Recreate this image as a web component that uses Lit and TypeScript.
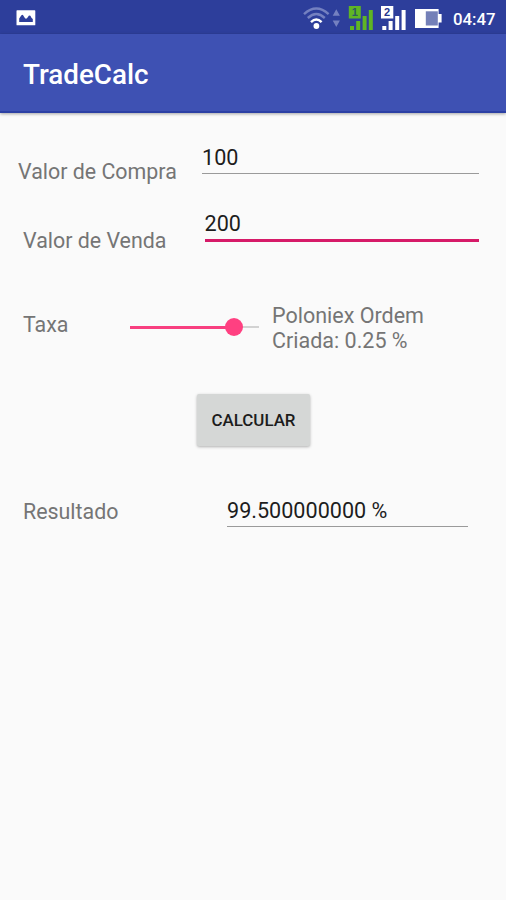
import { LitElement, html, css } from "lit";
import { customElement, property, state } from "lit/decorators.js";

@customElement("status-bar")
class StatusBar extends LitElement {
  static styles = css`
    :host {
      display: flex;
      align-items: flex-start;
      justify-content: space-between;
      height: 34px;
      background: #2d3e9b;
      color: #fff;
    }
    svg { display: block; }
    .photo { margin: 10px 0 0 16px; }
    .right { display: flex; height: 34px; margin-right: 10px; }
    .time {
      width: 43px;
      line-height: 38px;
      font-size: 16.8px;
      font-weight: 500;
      white-space: nowrap;
    }
    .badge { font: 700 11px "Liberation Sans", sans-serif; }
  `;
  render() {
    return html`
      <svg class="photo" width="20" height="16" viewBox="0 0 20 16">
        <rect x="0.5" y="0.3" width="18.8" height="15" rx="0.6" fill="#fff" />
        <path d="M3.2 12V8.6l2.2-3.4 1.4-.4 2.4 3.6 1.6.2 2.2-3 1.4.2 1.2 2.2 1.2 1V12z" fill="#2d3e9b" />
      </svg>
      <div class="right">
        <svg width="153" height="34" viewBox="300 0 153 34">
          <g fill="none" stroke-width="2.4">
            <path d="M304 14.2Q316.3 3 328.6 14.2" stroke="#7480c0" />
            <path d="M307.8 18Q316.3 10.2 324.8 18" stroke="#7480c0" />
            <path d="M311 22.2Q316.3 17 321.6 22.2" stroke="#fff" />
          </g>
          <circle cx="316.4" cy="26" r="2.9" fill="#fff" />
          <path d="M336.3 9.3l3.6 6.4h-7.2zM336.3 27l3.6-6.4h-7.2z" fill="#7480c0" />
          <g fill="#5fb524">
            <rect x="348.8" y="6" width="12" height="12.5" />
            <rect x="350" y="26" width="4" height="4" />
            <rect x="356.2" y="21" width="4" height="9" />
            <rect x="362.6" y="16" width="4" height="14" />
            <rect x="368.8" y="10" width="4" height="20" />
          </g>
          <text class="badge" x="351.7" y="16.2" fill="#2d5a62">1</text>
          <g fill="#fff">
            <rect x="381" y="6" width="12.3" height="12.5" />
            <rect x="382.3" y="26" width="4" height="4" />
            <rect x="388.6" y="21" width="4" height="9" />
            <rect x="395.2" y="16" width="4" height="14" />
            <rect x="401.6" y="10" width="4" height="20" />
          </g>
          <text class="badge" x="384.1" y="16.3" fill="#26368e">2</text>
          <path d="M415 9h23.6v5h3v8.4h-3V28H415z" fill="#fff" />
          <rect x="425.8" y="11.3" width="12" height="14.2" fill="#7480b8" />
        </svg>
        <span class="time">04:47</span>
      </div>
    `;
  }
}

@customElement("text-field")
class TextField extends LitElement {
  @property() value = "";
  @property({ type: Boolean, reflect: true }) active = false;
  static styles = css`
    :host {
      display: block;
      box-sizing: border-box;
      height: 29px;
      line-height: 26px;
      font-size: 21.6px;
      color: #1d1d1d;
      border-bottom: 1.5px solid #9a9a9a;
      white-space: nowrap;
    }
    :host([active]) { height: 31px; border-bottom: 3px solid #d61a68; }
  `;
  render() {
    return html`${this.value}`;
  }
}

@customElement("app-root")
class AppRoot extends LitElement {
  @state() buy = "100";
  @state() sell = "200";
  @state() result = "99.500000000 %";
  @state() rate = 80.5;

  static styles = css`
    :host {
      display: flex;
      flex-direction: column;
      height: 900px;
      background: #fafafa;
      font-family: Roboto, sans-serif;
      font-size: 21.4px;
      color: #757575;
      overflow: hidden;
    }
    .toolbar {
      height: 77px;
      flex: none;
      line-height: 82px;
      padding-left: 23px;
      background: #3e51b3;
      border-bottom: 2px solid #2c40a4;
      box-shadow: 0 1px 3px rgba(0, 0, 0, 0.35);
      color: #fff;
      font-size: 27.8px;
      font-weight: 500;
    }
    .row { display: flex; align-items: flex-start; flex: none; }
    .label { line-height: 26px; white-space: nowrap; flex: none; }
    .buy { padding: 32px 27px 0 18px; height: 66px; }
    .sell { padding: 0 27px 0 23px; height: 92px; }
    .rate { padding-left: 23px; height: 91px; }
    .result { padding: 0 38px 0 23px; }
    .buy .label { width: 184px; margin-top: 14px; }
    .sell .label { width: 181.5px; margin-top: 17px; }
    .rate .label { width: 107px; margin-top: 9px; }
    .result .label { width: 204px; margin-top: 1px; }
    text-field { flex: 1; }
    .track {
      display: flex;
      align-items: center;
      width: 129px;
      height: 18px;
      margin-top: 15px;
    }
    .filled { height: 3px; background: #f83f80; }
    .thumb {
      width: 18px;
      height: 18px;
      margin: 0 -9px;
      border-radius: 50%;
      background: #ff4081;
      z-index: 1;
    }
    .rest { flex: 1; height: 2px; background: #d2d2d2; }
    .fee { margin-left: 13px; font-size: 21.5px; line-height: 25.2px; }
    .button {
      align-self: flex-start;
      flex: none;
      width: 113px;
      height: 52px;
      margin: 0 0 52px 197px;
      border-radius: 2px;
      background: #d5d7d6;
      box-shadow: 0 1px 3px rgba(0, 0, 0, 0.3);
      color: #1c1c1c;
      font-size: 16.9px;
      font-weight: 500;
      line-height: 52px;
      text-align: center;
    }
  `;

  render() {
    return html`
      <status-bar></status-bar>
      <div class="toolbar">TradeCalc</div>
      <div class="row buy">
        <span class="label">Valor de Compra</span>
        <text-field .value=${this.buy}></text-field>
      </div>
      <div class="row sell">
        <span class="label">Valor de Venda</span>
        <text-field active .value=${this.sell}></text-field>
      </div>
      <div class="row rate">
        <span class="label">Taxa</span>
        <div class="track">
          <div class="filled" style="width:${this.rate}%"></div>
          <div class="thumb"></div>
          <div class="rest"></div>
        </div>
        <div class="fee">Poloniex Ordem<br />Criada: 0.25 %</div>
      </div>
      <div class="button">CALCULAR</div>
      <div class="row result">
        <span class="label">Resultado</span>
        <text-field .value=${this.result}></text-field>
      </div>
    `;
  }
}
